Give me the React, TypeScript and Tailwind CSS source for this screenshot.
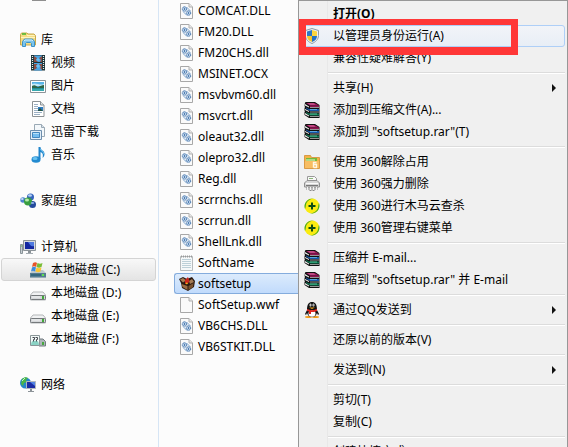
import type { ReactNode } from "react";

const Svg = ({ children }: { children: ReactNode }) => (
  <svg viewBox="0 0 16 16" className="size-4 shrink-0" aria-hidden="true">
    {children}
  </svg>
);

const LibraryIcon = () => (
  <Svg>
    <path d="M.5 13V2.5L1.5 1H7l1 1h6l1.5 1.5V13z" fill="#f4dc83" stroke="#c9a94c" />
    <path d="M2 2h4" stroke="#4fb832" strokeWidth="1.6" />
    <path d="M7 3.5h7.5M1 5.5h14" stroke="#fff3bd" />
    <path d="M2.5 14.5v-5l2-2.500h8l2 2.500v5h-3v-3l-1-1h-4l-1 1v3z" fill="#7cc4ec" stroke="#3e92c6" />
    <path d="M4 9l1-1h7l1 1" fill="none" stroke="#d5f0fc" />
  </Svg>
);

const VideoIcon = () => (
  <Svg>
    <path d="M1 0h14v15.500H1z" fill="#1d3338" />
    <path d="M4 .5h8v6.500H4zM4 8h8v7.500H4z" fill="#4aa5e3" />
    <path d="M4 1l3 2-1 2 2 2H4zM12 1L9 3l2 2-1 2h2zM4 9h4l-2 2 1 2-3 2zM12 9H9l2 3-1 1 2 2z" fill="#8b4d43" />
    <path d="M2.500 1v14M13.500 1v14" stroke="#e7f1ee" strokeWidth="1.200" strokeDasharray="1 1" />
    <path d="M8 3l2 2-2 1-2-1zM8 9l2 2-2 2-2-2z" fill="#69c1f4" />
  </Svg>
);

const PictureIcon = () => (
  <Svg>
    <path d="M.5 2.500h15v12H.5z" fill="#fff" stroke="#8c9499" />
    <path d="M2 4h12v9H2z" fill="#58b4e8" />
    <path d="M2 6c4-2 8 2 12 0v2H2z" fill="#c3e8f6" />
    <path d="M2 8c3-2 4 0 6 1 2-1 4-2 6-2v4H2z" fill="#2e6547" />
    <path d="M2 10h12v3H2z" fill="#218f9a" />
    <path d="M2 12h12" stroke="#4cc1c1" />
  </Svg>
);

const DocumentIcon = () => (
  <Svg>
    <path d="M2.500 .5h8l3.500 3.500v11.500H2.500z" fill="#fff" stroke="#8d9295" />
    <path d="M10.500 .5V4H14" fill="#dce1e4" stroke="#8d9295" />
    <path d="M4 3.500h4M4 5.500h4M4 7.500h4M4 9.500h4M4 11.500h8M4 13.500h6" stroke="#9cb0c4" />
    <path d="M8 6h5v4H8z" fill="#2e7cc0" />
    <path d="M8 9l2-2 3 3H8z" fill="#235245" />
  </Svg>
);

const DownloadsIcon = () => (
  <Svg>
    <path d="M4.500 .5h7L14.500 3.500v9h-10z" fill="#f4f8fb" stroke="#9aa9b5" />
    <path d="M11.500 .5v3h3" fill="#d7e1e9" stroke="#9aa9b5" />
    <path d="M.5 6.500h11v9H.5z" fill="#e3eef7" stroke="#6d8ead" />
    <path d="M2.500 8.500h7v5h-7z" fill="#74bdf0" stroke="#4286bf" />
    <path d="M3 9h6v1H3z" fill="#b8e1fa" />
  </Svg>
);

const MusicIcon = () => (
  <Svg>
    <ellipse cx="6" cy="12.500" rx="4.500" ry="3.300" fill="#238bd0" />
    <ellipse cx="5" cy="11.500" rx="2.500" ry="1.500" fill="#69c3f1" />
    <path d="M8.500 0h2c0 4 4 3 4 7 0 2-1 3-2 4 1-4 0-5-2-6v7l-2 1z" fill="#2185cb" />
    <path d="M10.500 2c1 3 3 2 3.500 5" fill="none" stroke="#74c8f3" />
  </Svg>
);

const HomegroupIcon = () => (
  <Svg>
    <circle cx="10.500" cy="4" r="3.500" fill="#3665bd" />
    <circle cx="3" cy="7" r="2.700" fill="#4c83cd" />
    <circle cx="12.500" cy="11.500" r="3.500" fill="#254b9d" />
    <circle cx="8" cy="8.500" r="4" fill="#389e40" />
    <ellipse cx="7" cy="7" rx="2" ry="1.500" fill="#b9ebae" />
    <ellipse cx="10" cy="2.500" rx="2" ry="1.200" fill="#b5d2f4" />
    <ellipse cx="2.300" cy="6" rx="1.300" ry="1" fill="#c3ddf7" />
    <ellipse cx="12.500" cy="10" rx="1.800" ry="1" fill="#8eafe3" />
  </Svg>
);

const ComputerIcon = () => (
  <Svg>
    <path d="M.5 5.500h2v9h-2z" fill="#c7ced2" stroke="#8a9499" />
    <path d="M1 7h1" stroke="#54b948" />
    <path d="M3.500 1.500h12v10h-12z" fill="#d6dadd" stroke="#8d9499" />
    <path d="M5 3h9v7H5z" fill="#1327a0" />
    <path d="M8 3h6v4c-3 1-4-1-6-4z" fill="#4d78df" />
    <path d="M8 12h3v2H8z" fill="#8b9297" />
    <path d="M6 14.500h7" stroke="#a5adb2" />
  </Svg>
);

const SystemDriveIcon = () => (
  <Svg>
    <path d="M3 8h10l3 3v4.500H0V11z" fill="#bcc7cd" />
    <path d="M0 11h16v4.500H0z" fill="#567c90" />
    <path d="M1 12h10v2H1z" fill="#35687f" />
    <path d="M12 12h2v2h-2z" fill="#5ce34d" />
    <path d="M3 1c2-1 3-1 4 0L6 5c-1-1-3-1-4 0z" fill="#e65428" />
    <path d="M7.500 1c2 1 3 1 5 0l-1 4c-2 1-3 1-5 0z" fill="#79bd35" />
    <path d="M2 5.500c1-1 3-1 4 0l-1 4c-1-1-3-1-4 0z" fill="#3b8bdd" />
    <path d="M6.500 5.500c2 1 3 1 5 0l-1 4c-2 1-3 1-5 0z" fill="#f9c532" />
  </Svg>
);

const DriveIcon = () => (
  <Svg>
    <path d="M.5 10L3 7h10l2.500 3v5H.5z" fill="#f1f2f3" stroke="#b4b7b9" />
    <path d="M1.500 10.500h13q1 0 1 1v2q0 1-1 1h-13q-1 0-1-1v-2q0-1 1-1z" fill="#d4d7d9" stroke="#75797c" />
    <path d="M2 12h8" stroke="#f3f4f5" />
    <path d="M12 11h2v3h-2z" fill="#42a83a" />
  </Svg>
);

const SharedDriveIcon = () => (
  <Svg>
    <path d="M9 8h4l2.500 2.500V15H9z" fill="#aeb6ba" stroke="#727b80" />
    <path d="M12 11h2v3h-2z" fill="#48a83e" />
    <path d="M.5 4.500h9v10h-9z" fill="#f4faf9" stroke="#8a9698" />
    <path d="M1 14c0-4 2-5 4-4 2-1 4 0 4 4z" fill="#8ad2c4" />
    <path d="M2.500 6.500h2v2h-1v2M5.500 6.500h2v2h-1v2" fill="none" stroke="#454a50" />
  </Svg>
);

const NetworkIcon = () => (
  <Svg>
    <circle cx="5.500" cy="6" r="5.500" fill="#2685cb" />
    <path d="M2 2c2-2 5-2 6-1L6 3l1 2-3 1-1 3-2-2z" fill="#4ab647" />
    <path d="M2 4l3-3" stroke="#c7f0ce" />
    <path d="M6.500 4.500h9v7h-9z" fill="#1b2ca4" stroke="#b3b9be" />
    <path d="M10 5h5v4z" fill="#5283e4" />
    <path d="M10 12h2v2h-2zM8 14h6v1H8z" fill="#8c9398" />
  </Svg>
);

const Paper = ({ children }: { children?: ReactNode }) => (
  <svg viewBox="0 0 13 16" className="h-4 w-[13px] shrink-0" aria-hidden="true">
    <path d="M.5 .5h8.500l3.500 3.500v11.500H.5z" fill="#fafafa" stroke="#a8a8a8" />
    <path d="M9 .5V4h3.500" fill="#e8e8e8" stroke="#b0b0b0" />
    {children}
  </svg>
);

const DllIcon = () => (
  <Paper>
    <g fill="none" stroke="#2f66a5">
      <path d="M3 8.500l4 4M6.500 4l4 4" stroke="#7fa6cf" />
      <circle cx="4.500" cy="6" r="2.200" fill="#dbe8f5" strokeDasharray="1.400 .4" />
      <circle cx="8.500" cy="10" r="2.200" fill="#dbe8f5" strokeDasharray="1.400 .4" />
      <circle cx="4.500" cy="6" r=".6" />
      <circle cx="8.500" cy="10" r=".6" />
    </g>
  </Paper>
);

const TextFileIcon = () => (
  <svg viewBox="0 0 13 16" className="h-4 w-[13px] shrink-0" aria-hidden="true">
    <path d="M.5 1.500h12v14H.5z" fill="#f5f8f9" stroke="#b7bbbd" />
    <path d="M1 1.500h11" stroke="#999" strokeWidth="2" strokeDasharray="1 1" />
    <path d="M2 4.500h9M2 6.500h9M2 8.500h9M2 10.500h9M2 12.500h9" stroke="#bdd0d8" />
  </svg>
);

const BlankFileIcon = () => <Paper />;

const PackageIcon = () => (
  <Svg>
    <path d="M0 3l4-2 4 2 5-2 3 4-1 6-6 4-6-3-1-5z" fill="#2b1a11" />
    <path d="M1 3.500l3-1.500 3 2.500-3 2zM10 5l3-2 2 3-4 2z" fill="#a67c54" />
    <path d="M2.500 8l6 2v4l-5-3z" fill="#9a6c44" />
    <path d="M9.500 10l5-3-.5 4-4.500 3z" fill="#79522f" />
    <path d="M6 4l3-3 1.500 4L9 7.500 6 8z" fill="#c9251b" />
    <path d="M7.500 6.500l1.500.5-1 1.500-1.500-1z" fill="#f0bb24" />
  </Svg>
);

const ShieldIcon = () => (
  <Svg>
    <path d="M8 .5l6.500 2v5c0 4-3 6.500-6.500 8-3.500-1.500-6.500-4-6.500-8v-5z" fill="#edf0f2" stroke="#8d9aa6" />
    <path d="M8 2v6H3V3.500z" fill="#2e79c8" />
    <path d="M8 2l5 1.500V8H8z" fill="#fbd53d" />
    <path d="M3 8h5v6c-3-1-5-3-5-6z" fill="#f4c62d" />
    <path d="M8 8h5c0 3-2 5-5 6z" fill="#2372c4" />
  </Svg>
);

// three stacked books
const RarIcon = () => (
  <Svg>
    <path d="M1 .5L2 0h9l4.500 3v13H5L.5 13V10l.5-.5-.5-.5V6L1 5 .5 4z" fill="#111" />
    <path d="M2 1h8.500L15 3.500H6z" fill="#a3195c" />
    <path d="M3.500 1.500h6l2 1H6z" fill="#d678a8" />
    <path d="M6 3.500h9v1.500H6z" fill="#8d1450" />
    <path d="M1 2l4 2.500v1L1 3.500zM1 7l4 2v1L1 8zM1 11l4 2.500v1L1 12.500z" fill="#f2f2f2" />
    <path d="M2 5.500l3 1.500h10v2H6L2 6.500z" fill="#1456a8" />
    <path d="M6 7.500h7" stroke="#56a4df" />
    <path d="M6 5.500h9M6 10h9M6 14.500h9" stroke="#cfcfcf" strokeWidth=".7" />
    <path d="M2 10l3 1.500h10v2H6L2 11z" fill="#0e7a55" />
    <path d="M6 12h7" stroke="#52c095" />
  </Svg>
);

const UnlockFolderIcon = () => (
  <Svg>
    <path d="M.5 14.500v-13h6l1 2h8v11z" fill="#f3b346" stroke="#d99a45" />
    <path d="M2 4h11v4H2z" fill="#73bb39" />
    <path d="M2 5.500h9v1H2z" fill="#eff5d2" />
    <path d="M1 7h14v7H1z" fill="#f8bd62" />
    <path d="M9.500 13.500v-5h3M9.500 10.500h3v3h-3" fill="none" stroke="#fff6e2" strokeWidth="1.400" />
  </Svg>
);

const ShredderIcon = () => (
  <Svg>
    <path d="M3.500 5.500v-5h7l2 2v3" fill="#f8f8f8" stroke="#999" />
    <path d="M5 2.500h4" stroke="#8cb779" />
    <path d="M.5 7L3 4.500h10L15.500 7v4H.5z" fill="#d5d5d5" stroke="#909090" />
    <path d="M2 7.500h12" stroke="#fafafa" />
    <path d="M2 9.500h12" stroke="#777" />
    <path d="M3.500 11v3M6.500 11v4M9.500 11v4M12.500 11v3" stroke="#888" strokeWidth="2" />
    <path d="M3.500 11v3M6.500 11v3M9.500 11v3M12.500 11v3" stroke="#f3f3f3" />
  </Svg>
);

const SafeIcon = () => (
  <Svg>
    <circle cx="8" cy="8" r="7.500" fill="#faec10" />
    <path d="M1 11C-1 5 4 0 10 .5 6 1 4 2.500 2.500 5 1.500 7 2 9 1 11zM15 5c2 6-3 11-9 10.500 4-.5 6-2 7.500-4.500 1-2 .5-4 1.500-6z" fill="#3ca62e" />
    <path d="M8 4.500v7M4.500 8h7" stroke="#0e4c12" strokeWidth="2" />
  </Svg>
);

const PenguinIcon = () => (
  <Svg>
    <ellipse cx="4.500" cy="15" rx="3.500" ry="1" fill="#f29b18" />
    <ellipse cx="11.500" cy="15" rx="3.500" ry="1" fill="#f29b18" />
    <path d="M3 8C3 2 5 0 8 0s5 2 5 8l2 4-1 1-1-2c-1 3-3 4-5 4s-4-1-5-4l-1 2-1-1z" fill="#111" />
    <ellipse cx="8" cy="11.500" rx="3.500" ry="3.200" fill="#fff" />
    <ellipse cx="6.500" cy="3" rx="1" ry="1.500" fill="#fff" />
    <ellipse cx="9.500" cy="3" rx="1" ry="1.500" fill="#fff" />
    <path d="M6.500 3h.7M9 3h.7" stroke="#111" />
    <path d="M5 5.500h6L8 7z" fill="#f4a51c" />
    <path d="M3 7c3 1.500 7 1.500 10 0v2c-2 1-4 1-6 1v2H5v-2.500L3 9z" fill="#e12620" />
  </Svg>
);

interface NavItem {
  label: string;
  icon: () => ReactNode;
  selected?: boolean;
}

const navGroups: { head: NavItem; items: NavItem[] }[] = [
  {
    head: { label: "库", icon: LibraryIcon },
    items: [
      { label: "视频", icon: VideoIcon },
      { label: "图片", icon: PictureIcon },
      { label: "文档", icon: DocumentIcon },
      { label: "迅雷下载", icon: DownloadsIcon },
      { label: "音乐", icon: MusicIcon },
    ],
  },
  { head: { label: "家庭组", icon: HomegroupIcon }, items: [] },
  {
    head: { label: "计算机", icon: ComputerIcon },
    items: [
      { label: "本地磁盘 (C:)", icon: SystemDriveIcon, selected: true },
      { label: "本地磁盘 (D:)", icon: DriveIcon },
      { label: "本地磁盘 (E:)", icon: DriveIcon },
      { label: "本地磁盘 (F:)", icon: SharedDriveIcon },
    ],
  },
  { head: { label: "网络", icon: NetworkIcon }, items: [] },
];

const files = [
  { name: "COMCAT.DLL", icon: DllIcon },
  { name: "FM20.DLL", icon: DllIcon },
  { name: "FM20CHS.dll", icon: DllIcon },
  { name: "MSINET.OCX", icon: DllIcon },
  { name: "msvbvm60.dll", icon: DllIcon },
  { name: "msvcrt.dll", icon: DllIcon },
  { name: "oleaut32.dll", icon: DllIcon },
  { name: "olepro32.dll", icon: DllIcon },
  { name: "Reg.dll", icon: DllIcon },
  { name: "scrrnchs.dll", icon: DllIcon },
  { name: "scrrun.dll", icon: DllIcon },
  { name: "ShellLnk.dll", icon: DllIcon },
  { name: "SoftName", icon: TextFileIcon },
  { name: "softsetup", icon: PackageIcon, selected: true },
  { name: "SoftSetup.wwf", icon: BlankFileIcon },
  { name: "VB6CHS.DLL", icon: DllIcon },
  { name: "VB6STKIT.DLL", icon: DllIcon },
];

interface MenuItem {
  label: string;
  icon?: () => ReactNode;
  bold?: boolean;
  active?: boolean;
  submenu?: boolean;
}

const menuSections: MenuItem[][] = [
  [
    { label: "打开(O)", bold: true },
    { label: "以管理员身份运行(A)", icon: ShieldIcon, active: true },
    { label: "兼容性疑难解答(Y)" },
  ],
  [
    { label: "共享(H)", submenu: true },
    { label: "添加到压缩文件(A)...", icon: RarIcon },
    { label: '添加到 "softsetup.rar"(T)', icon: RarIcon },
  ],
  [
    { label: "使用 360解除占用", icon: UnlockFolderIcon },
    { label: "使用 360强力删除", icon: ShredderIcon },
    { label: "使用 360进行木马云查杀", icon: SafeIcon },
    { label: "使用 360管理右键菜单", icon: SafeIcon },
  ],
  [
    { label: "压缩并 E-mail...", icon: RarIcon },
    { label: '压缩到 "softsetup.rar" 并 E-mail', icon: RarIcon },
  ],
  [{ label: "通过QQ发送到", icon: PenguinIcon, submenu: true }],
  [{ label: "还原以前的版本(V)" }],
  [{ label: "发送到(N)", submenu: true }],
  [{ label: "剪切(T)" }, { label: "复制(C)" }],
  [{ label: "创建快捷方式(S)" }],
];

const NavRow = ({ label, icon: Icon, selected, nested }: NavItem & { nested?: boolean }) => (
  <a
    href="#"
    className={`flex h-[23px] items-center gap-[5px] rounded-[3px] border ${
      nested ? "pl-7" : "pl-[18px]"
    } ${
      selected
        ? "border-[#d4d4d4] bg-linear-to-b from-[#f8f8f8] to-[#e4e4e4]"
        : "border-transparent"
    }`}
  >
    <Icon />
    <span>{label}</span>
  </a>
);

const Sidebar = () => (
  <nav className="w-[28%] shrink-0 border-r border-[#d6e5f5] pr-0.5 pl-px">
    <div className="flex h-7 items-start pl-[31px]">
      <div className="h-px w-3.5 bg-[#8f8f8f]"></div>
    </div>
    <div className="flex flex-col gap-[23px]">
      {navGroups.map(({ head, items }) => (
        <div key={head.label}>
          <NavRow {...head} />
          {items.map((item) => (
            <NavRow key={item.label} {...item} nested />
          ))}
        </div>
      ))}
    </div>
  </nav>
);

const FileList = () => (
  <main className="w-[139px] shrink-0 pl-[15px]">
    {files.map(({ name, icon: Icon, selected }) => (
      <button
        key={name}
        type="button"
        className={`flex h-[21px] w-full items-center gap-[3px] rounded-l-[3px] border border-r-0 pl-[3px] text-left ${
          selected
            ? "border-[#84acdd] bg-linear-to-b from-[#dcebfc] to-[#c1dbfc]"
            : "border-transparent"
        }`}
      >
        <span className="flex w-[17px] justify-center">
          <Icon />
        </span>
        <span>{name}</span>
      </button>
    ))}
  </main>
);

const MenuRow = ({ label, icon: Icon, bold, active, submenu }: MenuItem) => (
  <button
    type="button"
    role="menuitem"
    className={`flex h-[22px] w-full items-center rounded-[3px] border pl-0.5 text-left ${
      active
        ? "border-[#aecff7] bg-linear-to-b from-[#f2f4f8] to-[#e8eef6]"
        : "border-transparent"
    } ${bold ? "font-bold" : ""}`}
  >
    <span className="w-[29px] shrink-0">{Icon && <Icon />}</span>
    <span className="flex-1 whitespace-nowrap">{label}</span>
    {submenu && (
      <svg viewBox="0 0 4 8" className="mr-2 h-2 w-1" aria-hidden="true">
        <path d="M0 0l4 4-4 4z" fill="#111" />
      </svg>
    )}
  </button>
);

const ContextMenu = () => (
  <div
    role="menu"
    className="relative flex-1 self-start border border-[#979797] bg-linear-to-r from-[#f0f0f0] from-[28px] via-[#e0e0e0] via-[28px] to-[#f0f0f0] to-[29px] px-0.5 py-0.5"
  >
    {menuSections.map((section, i) => (
      <div key={section[0].label}>
        {i > 0 && (
          <div className="flex h-2 items-center pl-[27px]">
            <div className="h-0.5 w-full border-t border-[#dcdcdc] bg-white"></div>
          </div>
        )}
        {section.map((item) => (
          <MenuRow key={item.label} {...item} />
        ))}
      </div>
    ))}
    {/* red frame round "run as administrator" */}
    <div className="pointer-events-none absolute top-[18px] left-0 h-9 w-[219px] border-x-[7px] border-t-[6px] border-b-8 border-[#ff3737]"></div>
  </div>
);

export default function App() {
  return (
    <div className="flex h-screen overflow-hidden bg-[#fcfcfc] font-['Noto_Sans','Noto_Sans_CJK_SC',sans-serif] text-xs text-black">
      <Sidebar />
      <FileList />
      <ContextMenu />
    </div>
  );
}
